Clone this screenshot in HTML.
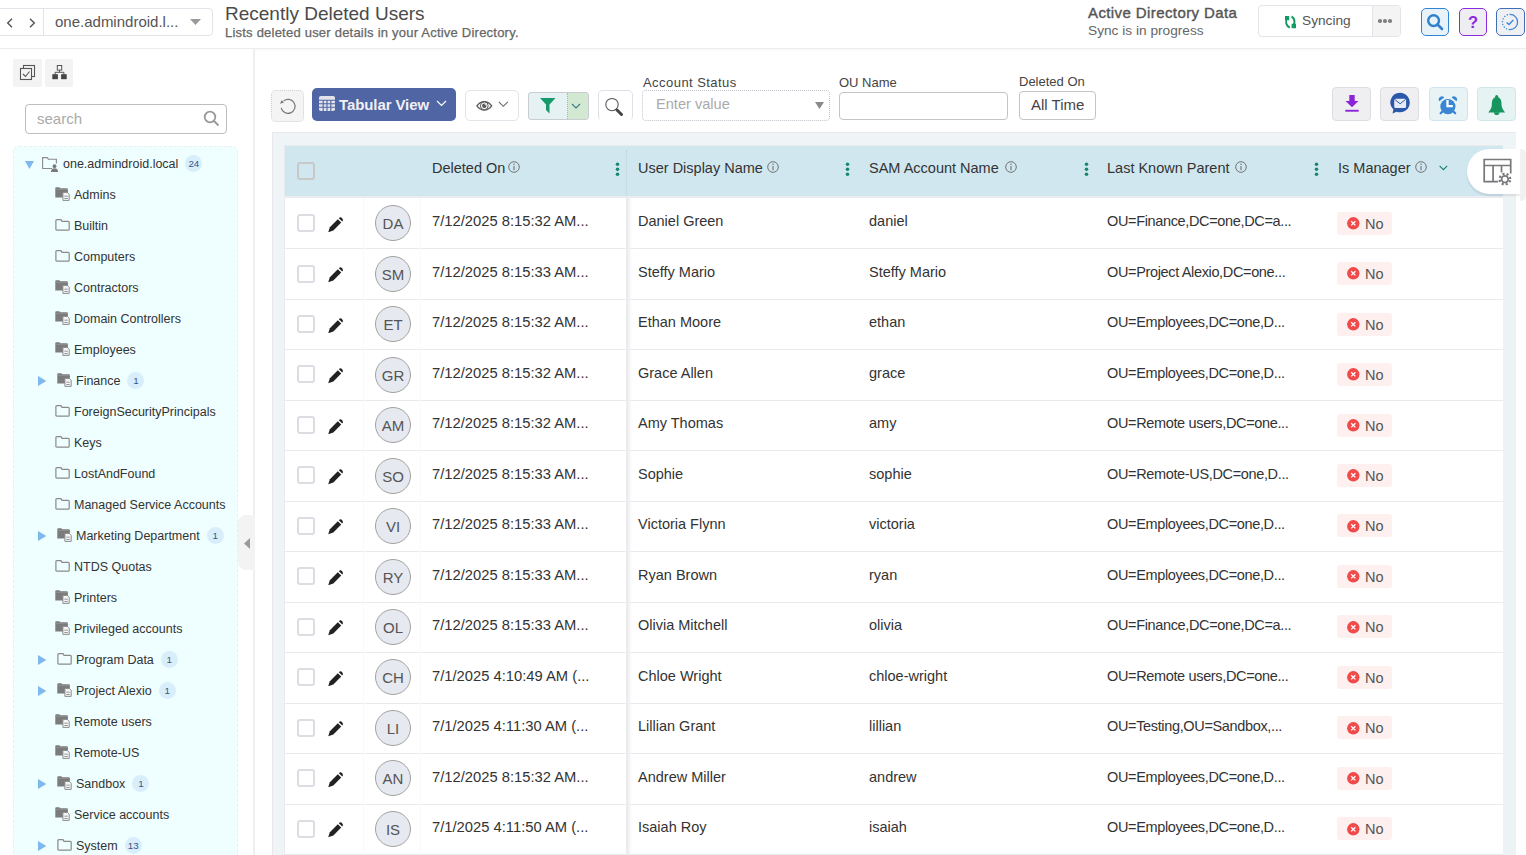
<!DOCTYPE html>
<html><head><meta charset="utf-8">
<style>
*{box-sizing:border-box;margin:0;padding:0}
html,body{width:1526px;height:855px;overflow:hidden;background:#fff;font-family:"Liberation Sans",sans-serif;color:#333}
.a{position:absolute}
#hdr{left:0;top:0;width:1526px;height:49px;background:#fff;border-bottom:1px solid #ececec;box-shadow:0 1px 2px rgba(0,0,0,0.04)}
#side{left:0;top:49px;width:255px;height:806px;background:#fff;border-right:2px solid #efefef}
#tree{left:13px;top:146px;width:225px;height:720px;background:#effefe;border-radius:6px;border:1px dashed #e6f1f1}
.ti{position:absolute;height:20px;font-size:12.5px;color:#333;white-space:nowrap;line-height:20px}
.badge{display:inline-block;background:#d8eefb;color:#3a5580;border-radius:9px;font-size:9.8px;line-height:17px;height:17px;min-width:17px;text-align:center;padding:0 2px;vertical-align:1px;margin-left:7px}
#panel{left:272px;top:132px;width:1244px;height:723px;background:#eff4f7;border-left:1px solid #e8e8ec;border-top:1px solid #eaeaee}
#thead{left:285px;top:146px;width:1218px;height:50px;background:#d0e7ef}
.th{position:absolute;top:146px;height:50px;line-height:44px;font-size:14.5px;color:#333;white-space:nowrap}
.row{position:absolute;left:285px;width:1218px;height:50.47px;background:#fff;border-bottom:1px solid #e9e9ee}
.cell{position:absolute;font-size:14.5px;color:#333;white-space:nowrap;line-height:20px}
.av{position:absolute;left:375px;width:36px;height:36px;border-radius:50%;background:#e6e9ef;border:1px solid #a2a2a2;font-size:15px;color:#555;text-align:center;line-height:35px}
.cb{position:absolute;left:297px;width:18px;height:18px;border:2px solid #dcdde2;border-radius:3px}
.no{position:absolute;left:1337px;width:55px;height:23px;background:#fff0f0;border-radius:3px;font-size:14.5px;color:#555;line-height:24px;padding-left:28px}

</style></head><body>
<div id="hdr" class="a"></div>
<div class="a" style="left:-6px;top:8px;width:219px;height:28px;border:1px solid #e3e4ea;border-radius:4px;background:#fff"></div>
<div class="a" style="left:43px;top:9px;width:1px;height:26px;background:#e3e4ea"></div>
<svg class="a" style="left:5px;top:16.5px" width="10" height="12" viewBox="0 0 10 12"><path d="M7 1.8 L2.7 6 L7 10.2" fill="none" stroke="#555" stroke-width="1.4"/></svg>
<svg class="a" style="left:26.5px;top:16.5px" width="10" height="12" viewBox="0 0 10 12"><path d="M3 1.8 L7.3 6 L3 10.2" fill="none" stroke="#555" stroke-width="1.4"/></svg>
<div class="a" style="left:55px;top:12px;font-size:15px;color:#555;line-height:20px">one.admindroid.l...</div>
<svg class="a" style="left:190px;top:19px" width="11" height="6" viewBox="0 0 11 6"><path d="M0 0 H11 L5.5 6Z" fill="#9a9a9a"/></svg>
<div class="a" style="left:225px;top:3px;font-size:19px;color:#4a4a4a;line-height:22px;white-space:nowrap">Recently Deleted Users</div>
<div class="a" style="left:225px;top:25px;font-size:13px;letter-spacing:0.22px;color:#666;-webkit-text-stroke:0.25px #666;line-height:15px;white-space:nowrap">Lists deleted user details in your Active Directory.</div>
<div class="a" style="left:1088px;top:4px;font-size:15px;letter-spacing:0.4px;color:#555;-webkit-text-stroke:0.4px #555;line-height:18px;white-space:nowrap">Active Directory Data</div>
<div class="a" style="left:1088px;top:22px;font-size:13.7px;color:#666;line-height:18px;white-space:nowrap">Sync is in progress</div>
<div class="a" style="left:1258px;top:5px;width:143px;height:32px;border:1px solid #e3e4ea;border-radius:4px;background:#fff;overflow:hidden"><div class="a" style="left:113px;top:0;width:30px;height:30px;background:#f4f4f5;border-left:1px solid #e3e4ea"></div></div>
<svg class="a" style="left:1283px;top:15px" width="14" height="14" viewBox="0 0 14 14"><path d="M4.2 3 A6.5 6.5 0 0 0 6.8 12.6" fill="none" stroke="#149a63" stroke-width="2"/><rect x="2" y="1" width="4.2" height="4.2" fill="#149a63"/><path d="M8.6 1.4 A6.5 6.5 0 0 1 10 11" fill="none" stroke="#149a63" stroke-width="2"/><rect x="8.6" y="8.8" width="4.4" height="4.4" fill="#149a63"/></svg>
<div class="a" style="left:1302px;top:12px;font-size:13.7px;color:#555;line-height:18px">Syncing</div>
<div class="a" style="left:1378.3px;top:19.3px;width:3.6px;height:3.6px;border-radius:50%;background:#808080"></div><div class="a" style="left:1383.2px;top:19.3px;width:3.6px;height:3.6px;border-radius:50%;background:#808080"></div><div class="a" style="left:1388.1px;top:19.3px;width:3.6px;height:3.6px;border-radius:50%;background:#808080"></div>
<div class="a" style="left:1421px;top:8px;width:28px;height:28px;border:1.5px solid #2f86d6;border-radius:5px;background:#e7f3f8"></div>
<svg class="a" style="left:1426px;top:13px" width="19" height="19" viewBox="0 0 19 19"><circle cx="7.6" cy="7.6" r="5.4" fill="none" stroke="#2f80cf" stroke-width="2.4"/><path d="M11.5 11.5 L16 16" stroke="#2f80cf" stroke-width="2.6" stroke-linecap="round"/></svg>
<div class="a" style="left:1459px;top:8px;width:28px;height:28px;border:1.5px solid #8a2be2;border-radius:5px;background:#eeeef2"></div>
<div class="a" style="left:1459px;top:10px;width:28px;text-align:center;font-size:16.5px;font-weight:bold;color:#8a2be2;line-height:22px;padding-top:1px">?</div>
<div class="a" style="left:1496px;top:8px;width:29px;height:28px;border:1.5px solid #3f6fb8;border-radius:5px;background:#eef0f4"></div>
<svg class="a" style="left:1501px;top:13px" width="19" height="19" viewBox="0 0 19 19"><path d="M9 1.4 A7.6 7.6 0 0 1 9 16.6" fill="none" stroke="#3f86d6" stroke-width="1.3"/><path d="M9 16.6 A7.6 7.6 0 0 1 9 1.4" fill="none" stroke="#3f86d6" stroke-width="1.3" stroke-dasharray="1.3 1.6"/><path d="M5.6 9.4 L8 11.6 L12.3 7" fill="none" stroke="#3f86d6" stroke-width="1.4"/></svg>
<div id="side" class="a"></div>
<div class="a" style="left:13px;top:59px;width:29px;height:28px;background:#f3f3f3;border-radius:2px"></div>
<div class="a" style="left:45px;top:59px;width:28px;height:28px;background:#f3f3f3;border-radius:2px"></div>
<svg class="a" style="left:19px;top:64px" width="17" height="17" viewBox="0 0 17 17"><rect x="4.5" y="1.5" width="11" height="11" fill="none" stroke="#555" stroke-width="1.1"/><rect x="1.5" y="4.5" width="11" height="11" fill="#f3f3f3" stroke="#555" stroke-width="1.1"/><path d="M4 10 L6.5 12.5 L10.5 7.5" fill="none" stroke="#555" stroke-width="1.1"/></svg>
<svg class="a" style="left:51px;top:65px" width="16" height="15" viewBox="0 0 16 15"><rect x="6.3" y="0.5" width="4.4" height="4.6" fill="none" stroke="#555" stroke-width="1"/><path d="M8.5 5.1 V7.3 M4.1 7.3 H12.9 M4.1 7.3 V9.5 M12.9 7.3 V9.5" stroke="#555" fill="none" stroke-width="1"/><rect x="1.3" y="9.2" width="5.6" height="5" fill="#444"/><rect x="10.1" y="9.2" width="5.6" height="5" fill="#444"/></svg>
<div class="a" style="left:25px;top:104px;width:202px;height:30px;border:1px solid #bdbdbd;border-radius:4px;background:#fff"></div>
<div class="a" style="left:37px;top:110px;font-size:15px;color:#aaa;line-height:18px">search</div>
<svg class="a" style="left:203px;top:110px" width="17" height="17" viewBox="0 0 17 17"><circle cx="7" cy="7" r="5.3" fill="none" stroke="#9a9a9a" stroke-width="1.8"/><path d="M11 11 L15.5 15.5" stroke="#9a9a9a" stroke-width="2"/></svg>
<div id="tree" class="a"></div>
<div class="a" style="left:238px;top:515px;width:17px;height:55px;background:#f3f3f3;border-radius:8px 0 0 8px"></div>
<svg class="a" style="left:244px;top:538px" width="6" height="11" viewBox="0 0 6 11"><path d="M6 0 V11 L0 5.5Z" fill="#9a9a9a"/></svg>
<svg class="a" style="left:25px;top:160.8px" width="9" height="8" viewBox="0 0 9 8"><path d="M0 0 H9 L4.5 8Z" fill="#7db9ee"/></svg>
<svg class="a" style="left:42px;top:157px" width="17" height="15" viewBox="0 0 17 15"><path d="M10 11.5 H0.6 V0.6 H5.2 L6.4 2.2 H14.4 V6.5" fill="none" stroke="#8a8a8a" stroke-width="1.1"/><circle cx="12.5" cy="9.2" r="1.9" fill="#7a7a7a"/><path d="M9 15 Q9 11.3 12.5 11.3 Q16 11.3 16 15Z" fill="#7a7a7a"/></svg>
<div class="ti" style="left:63px;top:154.3px">one.admindroid.local<span class="badge">24</span></div>
<svg class="a" style="left:55px;top:187px" width="16" height="15" viewBox="0 0 16 15"><path d="M0.3 1.2 Q0.3 0.3 1.2 0.3 H4.3 L5.3 1.3 H11.8 Q12.9 1.3 12.9 2.4 V10.4 H0.3Z" fill="#7b7b7b"/><path d="M0.7 2.3 H12.6" stroke="#a0a0a0" stroke-width="0.6"/><path d="M7.9 5.4 H12.3 L14.2 7.3 V13.4 H7.9Z" fill="#f4f6f8" stroke="#8c8c8c" stroke-width="1"/><path d="M9.3 9.2 H12.8 M9.3 11.5 H12.8" stroke="#8c8c8c" stroke-width="0.9"/></svg>
<div class="ti" style="left:74px;top:185.3px">Admins</div>
<svg class="a" style="left:55px;top:219px" width="16" height="13" viewBox="0 0 16 13"><path d="M0.9 1.6 Q0.9 0.6 1.9 0.6 H6 L7 2.3 H13.2 Q14.2 2.3 14.2 3.3 V10.2 Q14.2 11.2 13.2 11.2 H1.9 Q0.9 11.2 0.9 10.2Z" fill="none" stroke="#8a8a8a" stroke-width="1.2"/></svg>
<div class="ti" style="left:74px;top:216.3px">Builtin</div>
<svg class="a" style="left:55px;top:250px" width="16" height="13" viewBox="0 0 16 13"><path d="M0.9 1.6 Q0.9 0.6 1.9 0.6 H6 L7 2.3 H13.2 Q14.2 2.3 14.2 3.3 V10.2 Q14.2 11.2 13.2 11.2 H1.9 Q0.9 11.2 0.9 10.2Z" fill="none" stroke="#8a8a8a" stroke-width="1.2"/></svg>
<div class="ti" style="left:74px;top:247.3px">Computers</div>
<svg class="a" style="left:55px;top:280px" width="16" height="15" viewBox="0 0 16 15"><path d="M0.3 1.2 Q0.3 0.3 1.2 0.3 H4.3 L5.3 1.3 H11.8 Q12.9 1.3 12.9 2.4 V10.4 H0.3Z" fill="#7b7b7b"/><path d="M0.7 2.3 H12.6" stroke="#a0a0a0" stroke-width="0.6"/><path d="M7.9 5.4 H12.3 L14.2 7.3 V13.4 H7.9Z" fill="#f4f6f8" stroke="#8c8c8c" stroke-width="1"/><path d="M9.3 9.2 H12.8 M9.3 11.5 H12.8" stroke="#8c8c8c" stroke-width="0.9"/></svg>
<div class="ti" style="left:74px;top:278.3px">Contractors</div>
<svg class="a" style="left:55px;top:311px" width="16" height="15" viewBox="0 0 16 15"><path d="M0.3 1.2 Q0.3 0.3 1.2 0.3 H4.3 L5.3 1.3 H11.8 Q12.9 1.3 12.9 2.4 V10.4 H0.3Z" fill="#7b7b7b"/><path d="M0.7 2.3 H12.6" stroke="#a0a0a0" stroke-width="0.6"/><path d="M7.9 5.4 H12.3 L14.2 7.3 V13.4 H7.9Z" fill="#f4f6f8" stroke="#8c8c8c" stroke-width="1"/><path d="M9.3 9.2 H12.8 M9.3 11.5 H12.8" stroke="#8c8c8c" stroke-width="0.9"/></svg>
<div class="ti" style="left:74px;top:309.3px">Domain Controllers</div>
<svg class="a" style="left:55px;top:342px" width="16" height="15" viewBox="0 0 16 15"><path d="M0.3 1.2 Q0.3 0.3 1.2 0.3 H4.3 L5.3 1.3 H11.8 Q12.9 1.3 12.9 2.4 V10.4 H0.3Z" fill="#7b7b7b"/><path d="M0.7 2.3 H12.6" stroke="#a0a0a0" stroke-width="0.6"/><path d="M7.9 5.4 H12.3 L14.2 7.3 V13.4 H7.9Z" fill="#f4f6f8" stroke="#8c8c8c" stroke-width="1"/><path d="M9.3 9.2 H12.8 M9.3 11.5 H12.8" stroke="#8c8c8c" stroke-width="0.9"/></svg>
<div class="ti" style="left:74px;top:340.3px">Employees</div>
<svg class="a" style="left:38px;top:376.3px" width="9" height="10" viewBox="0 0 9 10"><path d="M0 0 V10 L8.3 5Z" fill="#7db9ee"/></svg>
<svg class="a" style="left:57px;top:373px" width="16" height="15" viewBox="0 0 16 15"><path d="M0.3 1.2 Q0.3 0.3 1.2 0.3 H4.3 L5.3 1.3 H11.8 Q12.9 1.3 12.9 2.4 V10.4 H0.3Z" fill="#7b7b7b"/><path d="M0.7 2.3 H12.6" stroke="#a0a0a0" stroke-width="0.6"/><path d="M7.9 5.4 H12.3 L14.2 7.3 V13.4 H7.9Z" fill="#f4f6f8" stroke="#8c8c8c" stroke-width="1"/><path d="M9.3 9.2 H12.8 M9.3 11.5 H12.8" stroke="#8c8c8c" stroke-width="0.9"/></svg>
<div class="ti" style="left:76px;top:371.3px">Finance<span class="badge">1</span></div>
<svg class="a" style="left:55px;top:405px" width="16" height="13" viewBox="0 0 16 13"><path d="M0.9 1.6 Q0.9 0.6 1.9 0.6 H6 L7 2.3 H13.2 Q14.2 2.3 14.2 3.3 V10.2 Q14.2 11.2 13.2 11.2 H1.9 Q0.9 11.2 0.9 10.2Z" fill="none" stroke="#8a8a8a" stroke-width="1.2"/></svg>
<div class="ti" style="left:74px;top:402.3px">ForeignSecurityPrincipals</div>
<svg class="a" style="left:55px;top:436px" width="16" height="13" viewBox="0 0 16 13"><path d="M0.9 1.6 Q0.9 0.6 1.9 0.6 H6 L7 2.3 H13.2 Q14.2 2.3 14.2 3.3 V10.2 Q14.2 11.2 13.2 11.2 H1.9 Q0.9 11.2 0.9 10.2Z" fill="none" stroke="#8a8a8a" stroke-width="1.2"/></svg>
<div class="ti" style="left:74px;top:433.3px">Keys</div>
<svg class="a" style="left:55px;top:467px" width="16" height="13" viewBox="0 0 16 13"><path d="M0.9 1.6 Q0.9 0.6 1.9 0.6 H6 L7 2.3 H13.2 Q14.2 2.3 14.2 3.3 V10.2 Q14.2 11.2 13.2 11.2 H1.9 Q0.9 11.2 0.9 10.2Z" fill="none" stroke="#8a8a8a" stroke-width="1.2"/></svg>
<div class="ti" style="left:74px;top:464.3px">LostAndFound</div>
<svg class="a" style="left:55px;top:498px" width="16" height="13" viewBox="0 0 16 13"><path d="M0.9 1.6 Q0.9 0.6 1.9 0.6 H6 L7 2.3 H13.2 Q14.2 2.3 14.2 3.3 V10.2 Q14.2 11.2 13.2 11.2 H1.9 Q0.9 11.2 0.9 10.2Z" fill="none" stroke="#8a8a8a" stroke-width="1.2"/></svg>
<div class="ti" style="left:74px;top:495.3px">Managed Service Accounts</div>
<svg class="a" style="left:38px;top:531.3px" width="9" height="10" viewBox="0 0 9 10"><path d="M0 0 V10 L8.3 5Z" fill="#7db9ee"/></svg>
<svg class="a" style="left:57px;top:528px" width="16" height="15" viewBox="0 0 16 15"><path d="M0.3 1.2 Q0.3 0.3 1.2 0.3 H4.3 L5.3 1.3 H11.8 Q12.9 1.3 12.9 2.4 V10.4 H0.3Z" fill="#7b7b7b"/><path d="M0.7 2.3 H12.6" stroke="#a0a0a0" stroke-width="0.6"/><path d="M7.9 5.4 H12.3 L14.2 7.3 V13.4 H7.9Z" fill="#f4f6f8" stroke="#8c8c8c" stroke-width="1"/><path d="M9.3 9.2 H12.8 M9.3 11.5 H12.8" stroke="#8c8c8c" stroke-width="0.9"/></svg>
<div class="ti" style="left:76px;top:526.3px">Marketing Department<span class="badge">1</span></div>
<svg class="a" style="left:55px;top:560px" width="16" height="13" viewBox="0 0 16 13"><path d="M0.9 1.6 Q0.9 0.6 1.9 0.6 H6 L7 2.3 H13.2 Q14.2 2.3 14.2 3.3 V10.2 Q14.2 11.2 13.2 11.2 H1.9 Q0.9 11.2 0.9 10.2Z" fill="none" stroke="#8a8a8a" stroke-width="1.2"/></svg>
<div class="ti" style="left:74px;top:557.3px">NTDS Quotas</div>
<svg class="a" style="left:55px;top:590px" width="16" height="15" viewBox="0 0 16 15"><path d="M0.3 1.2 Q0.3 0.3 1.2 0.3 H4.3 L5.3 1.3 H11.8 Q12.9 1.3 12.9 2.4 V10.4 H0.3Z" fill="#7b7b7b"/><path d="M0.7 2.3 H12.6" stroke="#a0a0a0" stroke-width="0.6"/><path d="M7.9 5.4 H12.3 L14.2 7.3 V13.4 H7.9Z" fill="#f4f6f8" stroke="#8c8c8c" stroke-width="1"/><path d="M9.3 9.2 H12.8 M9.3 11.5 H12.8" stroke="#8c8c8c" stroke-width="0.9"/></svg>
<div class="ti" style="left:74px;top:588.3px">Printers</div>
<svg class="a" style="left:55px;top:621px" width="16" height="15" viewBox="0 0 16 15"><path d="M0.3 1.2 Q0.3 0.3 1.2 0.3 H4.3 L5.3 1.3 H11.8 Q12.9 1.3 12.9 2.4 V10.4 H0.3Z" fill="#7b7b7b"/><path d="M0.7 2.3 H12.6" stroke="#a0a0a0" stroke-width="0.6"/><path d="M7.9 5.4 H12.3 L14.2 7.3 V13.4 H7.9Z" fill="#f4f6f8" stroke="#8c8c8c" stroke-width="1"/><path d="M9.3 9.2 H12.8 M9.3 11.5 H12.8" stroke="#8c8c8c" stroke-width="0.9"/></svg>
<div class="ti" style="left:74px;top:619.3px">Privileged accounts</div>
<svg class="a" style="left:38px;top:655.3px" width="9" height="10" viewBox="0 0 9 10"><path d="M0 0 V10 L8.3 5Z" fill="#7db9ee"/></svg>
<svg class="a" style="left:57px;top:653px" width="16" height="13" viewBox="0 0 16 13"><path d="M0.9 1.6 Q0.9 0.6 1.9 0.6 H6 L7 2.3 H13.2 Q14.2 2.3 14.2 3.3 V10.2 Q14.2 11.2 13.2 11.2 H1.9 Q0.9 11.2 0.9 10.2Z" fill="none" stroke="#8a8a8a" stroke-width="1.2"/></svg>
<div class="ti" style="left:76px;top:650.3px">Program Data<span class="badge">1</span></div>
<svg class="a" style="left:38px;top:686.3px" width="9" height="10" viewBox="0 0 9 10"><path d="M0 0 V10 L8.3 5Z" fill="#7db9ee"/></svg>
<svg class="a" style="left:57px;top:683px" width="16" height="15" viewBox="0 0 16 15"><path d="M0.3 1.2 Q0.3 0.3 1.2 0.3 H4.3 L5.3 1.3 H11.8 Q12.9 1.3 12.9 2.4 V10.4 H0.3Z" fill="#7b7b7b"/><path d="M0.7 2.3 H12.6" stroke="#a0a0a0" stroke-width="0.6"/><path d="M7.9 5.4 H12.3 L14.2 7.3 V13.4 H7.9Z" fill="#f4f6f8" stroke="#8c8c8c" stroke-width="1"/><path d="M9.3 9.2 H12.8 M9.3 11.5 H12.8" stroke="#8c8c8c" stroke-width="0.9"/></svg>
<div class="ti" style="left:76px;top:681.3px">Project Alexio<span class="badge">1</span></div>
<svg class="a" style="left:55px;top:714px" width="16" height="15" viewBox="0 0 16 15"><path d="M0.3 1.2 Q0.3 0.3 1.2 0.3 H4.3 L5.3 1.3 H11.8 Q12.9 1.3 12.9 2.4 V10.4 H0.3Z" fill="#7b7b7b"/><path d="M0.7 2.3 H12.6" stroke="#a0a0a0" stroke-width="0.6"/><path d="M7.9 5.4 H12.3 L14.2 7.3 V13.4 H7.9Z" fill="#f4f6f8" stroke="#8c8c8c" stroke-width="1"/><path d="M9.3 9.2 H12.8 M9.3 11.5 H12.8" stroke="#8c8c8c" stroke-width="0.9"/></svg>
<div class="ti" style="left:74px;top:712.3px">Remote users</div>
<svg class="a" style="left:55px;top:745px" width="16" height="15" viewBox="0 0 16 15"><path d="M0.3 1.2 Q0.3 0.3 1.2 0.3 H4.3 L5.3 1.3 H11.8 Q12.9 1.3 12.9 2.4 V10.4 H0.3Z" fill="#7b7b7b"/><path d="M0.7 2.3 H12.6" stroke="#a0a0a0" stroke-width="0.6"/><path d="M7.9 5.4 H12.3 L14.2 7.3 V13.4 H7.9Z" fill="#f4f6f8" stroke="#8c8c8c" stroke-width="1"/><path d="M9.3 9.2 H12.8 M9.3 11.5 H12.8" stroke="#8c8c8c" stroke-width="0.9"/></svg>
<div class="ti" style="left:74px;top:743.3px">Remote-US</div>
<svg class="a" style="left:38px;top:779.3px" width="9" height="10" viewBox="0 0 9 10"><path d="M0 0 V10 L8.3 5Z" fill="#7db9ee"/></svg>
<svg class="a" style="left:57px;top:776px" width="16" height="15" viewBox="0 0 16 15"><path d="M0.3 1.2 Q0.3 0.3 1.2 0.3 H4.3 L5.3 1.3 H11.8 Q12.9 1.3 12.9 2.4 V10.4 H0.3Z" fill="#7b7b7b"/><path d="M0.7 2.3 H12.6" stroke="#a0a0a0" stroke-width="0.6"/><path d="M7.9 5.4 H12.3 L14.2 7.3 V13.4 H7.9Z" fill="#f4f6f8" stroke="#8c8c8c" stroke-width="1"/><path d="M9.3 9.2 H12.8 M9.3 11.5 H12.8" stroke="#8c8c8c" stroke-width="0.9"/></svg>
<div class="ti" style="left:76px;top:774.3px">Sandbox<span class="badge">1</span></div>
<svg class="a" style="left:55px;top:807px" width="16" height="15" viewBox="0 0 16 15"><path d="M0.3 1.2 Q0.3 0.3 1.2 0.3 H4.3 L5.3 1.3 H11.8 Q12.9 1.3 12.9 2.4 V10.4 H0.3Z" fill="#7b7b7b"/><path d="M0.7 2.3 H12.6" stroke="#a0a0a0" stroke-width="0.6"/><path d="M7.9 5.4 H12.3 L14.2 7.3 V13.4 H7.9Z" fill="#f4f6f8" stroke="#8c8c8c" stroke-width="1"/><path d="M9.3 9.2 H12.8 M9.3 11.5 H12.8" stroke="#8c8c8c" stroke-width="0.9"/></svg>
<div class="ti" style="left:74px;top:805.3px">Service accounts</div>
<svg class="a" style="left:38px;top:841.3px" width="9" height="10" viewBox="0 0 9 10"><path d="M0 0 V10 L8.3 5Z" fill="#7db9ee"/></svg>
<svg class="a" style="left:57px;top:839px" width="16" height="13" viewBox="0 0 16 13"><path d="M0.9 1.6 Q0.9 0.6 1.9 0.6 H6 L7 2.3 H13.2 Q14.2 2.3 14.2 3.3 V10.2 Q14.2 11.2 13.2 11.2 H1.9 Q0.9 11.2 0.9 10.2Z" fill="none" stroke="#8a8a8a" stroke-width="1.2"/></svg>
<div class="ti" style="left:76px;top:836.3px">System<span class="badge">13</span></div>
<div class="a" style="left:271px;top:90px;width:33px;height:32px;border:1px dotted #d0d0d0;border-radius:5px;background:#f4f4f4"></div>
<svg class="a" style="left:279px;top:97px" width="18" height="18" viewBox="0 0 18 18"><path d="M2.2 10.8 A7 7 0 1 0 4.6 3.9" fill="none" stroke="#777" stroke-width="1.2"/><path d="M1 6.8 L2.6 3.3 L5.1 5.4Z" fill="#777"/></svg>
<div class="a" style="left:312px;top:88px;width:144px;height:33px;background:#5065a3;border-radius:5px"></div>
<svg class="a" style="left:319px;top:96px" width="16" height="15" viewBox="0 0 16 15"><rect x="0" y="0" width="16" height="15" rx="1.8" fill="#e2e3ea"/><path d="M0 4.2 H16 M0 7.8 H16 M0 11.3 H16 M4.2 4.2 V15 M8 4.2 V15 M11.8 4.2 V15" stroke="#5065a3" stroke-width="1.1"/></svg>
<div class="a" style="left:339px;top:95px;font-size:15px;font-weight:bold;color:#f0f0f4;line-height:18px;letter-spacing:-0.1px;padding-top:0.5px">Tabular View</div>
<svg class="a" style="left:436px;top:100px" width="11" height="7" viewBox="0 0 11 7"><path d="M1 1 L5.5 5.5 L10 1" fill="none" stroke="#fff" stroke-width="1.2"/></svg>
<div class="a" style="left:465px;top:90px;width:54px;height:31px;border:1px solid #e3e4ea;border-radius:5px;background:#fff"></div>
<svg class="a" style="left:475.5px;top:100.7px" width="17" height="10" viewBox="0 0 17 10"><path d="M0.9 4.8 C3.5 1.4 5.6 0.6 8.3 0.6 C11 0.6 13.1 1.4 15.7 4.8 C13.1 8.2 11 9 8.3 9 C5.6 9 3.5 8.2 0.9 4.8Z" fill="none" stroke="#555" stroke-width="1.3"/><circle cx="8.3" cy="4.8" r="3.9" fill="#fff" stroke="#555" stroke-width="1"/><circle cx="8.3" cy="4.8" r="2.2" fill="#555"/><circle cx="9.3" cy="3.8" r="0.7" fill="#ddd"/></svg>
<svg class="a" style="left:497.5px;top:101.3px" width="11" height="7" viewBox="0 0 11 7"><path d="M0.8 0.8 L5.3 5.3 L9.8 0.8" fill="none" stroke="#666" stroke-width="1.1"/></svg>
<div class="a" style="left:528px;top:92px;width:61px;height:28px;border:1px solid #c9cdd2;border-radius:3px;background:#e6f1f3;overflow:hidden"><div class="a" style="left:38px;top:0;width:23px;height:26px;background:#d3e8d0;border-left:1px dotted #b0b8b8"></div></div>
<svg class="a" style="left:540px;top:98px" width="16" height="16" viewBox="0 0 16 16"><path d="M0 0 H15.5 L9.5 6.5 V15.5 L6 12 V6.5Z" fill="#169a6a"/></svg>
<svg class="a" style="left:571px;top:103px" width="10" height="7" viewBox="0 0 10 7"><path d="M1 1 L5 5 L9 1" fill="none" stroke="#3a7a8a" stroke-width="1.1"/></svg>
<div class="a" style="left:598px;top:90px;width:35px;height:31px;border:1px solid #e0e1e8;border-bottom-color:transparent;border-radius:5px;background:#fff"></div>
<svg class="a" style="left:604px;top:97px" width="20" height="19" viewBox="0 0 20 19"><circle cx="8" cy="7.6" r="6.2" fill="none" stroke="#555" stroke-width="1.05"/><path d="M13 13 L17.5 17.5" stroke="#444" stroke-width="3" stroke-linecap="round"/></svg>
<div class="a" style="left:643px;top:74.5px;font-size:13px;letter-spacing:0.45px;color:#444;line-height:16px">Account Status</div>
<div class="a" style="left:642px;top:90px;width:188px;height:31px;border:1px dotted #c4c4cc;border-radius:4px;background:#fff"></div>
<div class="a" style="left:656px;top:95px;font-size:14.6px;color:#aaa;line-height:18px">Enter value</div>
<svg class="a" style="left:815px;top:102px" width="9" height="7" viewBox="0 0 9 7"><path d="M0 0 H9 L4.5 7Z" fill="#8a8a8a"/></svg>
<div class="a" style="left:839px;top:75px;font-size:13px;color:#444;line-height:16px">OU Name</div>
<div class="a" style="left:839px;top:92px;width:169px;height:28px;border:1px solid #c4c4c4;border-radius:4px;background:#fff"></div>
<div class="a" style="left:1019px;top:74px;font-size:13px;color:#444;line-height:16px">Deleted On</div>
<div class="a" style="left:1019px;top:91px;width:77px;height:29px;border:1px solid #c4c4c4;border-radius:4px;background:#fff"></div>
<div class="a" style="left:1031px;top:96px;font-size:15px;color:#444;line-height:18px">All Time</div>
<div class="a" style="left:1332px;top:87px;width:39px;height:34px;border:1px solid #dcdce2;border-radius:4px;background:#efeff2"></div>
<div class="a" style="left:1380px;top:87px;width:39px;height:34px;border:1px solid #dcdce2;border-radius:4px;background:#efeff2"></div>
<div class="a" style="left:1429px;top:87px;width:39px;height:34px;border:1px solid #cfe4ee;border-radius:4px;background:#e8f3f6"></div>
<div class="a" style="left:1477px;top:87px;width:39px;height:34px;border:1px solid #cfe6ea;border-radius:4px;background:#e6f3f3"></div>
<svg class="a" style="left:1342px;top:94px" width="20" height="20" viewBox="0 0 20 20"><path d="M7.3 1 H12.7 V7 H16.5 L10 13.2 L3.5 7 H7.3Z" fill="#8e24d8"/><rect x="3.3" y="15.8" width="13.4" height="1.9" fill="#8e24d8"/></svg>
<svg class="a" style="left:1389px;top:92px" width="22" height="23" viewBox="0 0 22 23"><path d="M11 0.7 A9.8 9.8 0 1 1 7.6 19.7 L3.5 21.5 L4.4 17.6 A9.8 9.8 0 0 1 11 0.7Z" fill="#2b58a8"/><rect x="5.2" y="6.8" width="11.9" height="9.2" rx="1.6" fill="#e8ecf6"/><path d="M5.9 7.6 L11.15 11.8 L16.4 7.6" fill="none" stroke="#2b58a8" stroke-width="1"/></svg>
<svg class="a" style="left:1437px;top:94.5px" width="22" height="20" viewBox="0 0 22 20"><circle cx="10.9" cy="11.6" r="7.6" fill="#3a86d2"/><path d="M2.4 6.2 A2.9 2.9 0 0 1 7.2 2.6Z M19.4 6.2 A2.9 2.9 0 0 0 14.6 2.6Z" fill="#3a86d2"/><path d="M5.3 16.6 L3.6 18.3 M16.5 16.6 L18.2 18.3" stroke="#3a86d2" stroke-width="2.2" stroke-linecap="round"/><path d="M10.5 5 V11.2 H15.8" fill="none" stroke="#fff" stroke-width="2.3"/></svg>
<svg class="a" style="left:1487px;top:94.6px" width="20" height="22" viewBox="0 0 20 22"><circle cx="9.7" cy="1.6" r="1.5" fill="#16965e"/><path d="M9.7 1.8 C14.5 2.6 14.5 7 14.6 10.5 C14.8 13.5 16.5 15.5 18.2 17.4 H1.2 C2.9 15.5 4.6 13.5 4.8 10.5 C4.9 7 4.9 2.6 9.7 1.8Z" fill="#16965e"/><path d="M6.9 17.2 A2.8 2.8 0 0 0 12.5 17.2Z" fill="#16965e"/></svg>
<div id="panel" class="a"></div>
<div class="a" style="left:1503px;top:196px;width:13px;height:659px;background:#edf2f5"></div>
<div id="thead" class="a"></div>
<div class="a" style="left:285px;top:196px;width:1218px;height:2px;background:#ececf0"></div><div class="a" style="left:285px;top:198px;width:1218px;height:1px;background:#fff"></div><div class="a" style="left:284px;top:145px;width:1px;height:710px;background:#e9e9ee"></div><div class="a" style="left:284px;top:145px;width:1219px;height:1px;background:#e9e9ee"></div>
<div class="cb" style="top:162px;border:2px solid #c8c8c8"></div>
<div class="th" style="left:432px">Deleted On</div>
<svg class="a" style="left:508px;top:161px" width="12" height="12" viewBox="0 0 12 12"><circle cx="6" cy="6" r="5.3" fill="none" stroke="#666" stroke-width="0.9"/><path d="M6 5 V9.2" stroke="#666" stroke-width="1"/><circle cx="6" cy="3.3" r="0.7" fill="#666"/></svg>
<svg class="a" style="left:614.5px;top:162px" width="5" height="15" viewBox="0 0 5 15"><circle cx="2.5" cy="2.2" r="1.75" fill="#17876a"/><circle cx="2.5" cy="7.2" r="1.75" fill="#17876a"/><circle cx="2.5" cy="12.2" r="1.75" fill="#17876a"/></svg>
<div class="th" style="left:638px">User Display Name</div>
<svg class="a" style="left:767px;top:161px" width="12" height="12" viewBox="0 0 12 12"><circle cx="6" cy="6" r="5.3" fill="none" stroke="#666" stroke-width="0.9"/><path d="M6 5 V9.2" stroke="#666" stroke-width="1"/><circle cx="6" cy="3.3" r="0.7" fill="#666"/></svg>
<svg class="a" style="left:844.5px;top:162px" width="5" height="15" viewBox="0 0 5 15"><circle cx="2.5" cy="2.2" r="1.75" fill="#17876a"/><circle cx="2.5" cy="7.2" r="1.75" fill="#17876a"/><circle cx="2.5" cy="12.2" r="1.75" fill="#17876a"/></svg>
<div class="th" style="left:869px">SAM Account Name</div>
<svg class="a" style="left:1005px;top:161px" width="12" height="12" viewBox="0 0 12 12"><circle cx="6" cy="6" r="5.3" fill="none" stroke="#666" stroke-width="0.9"/><path d="M6 5 V9.2" stroke="#666" stroke-width="1"/><circle cx="6" cy="3.3" r="0.7" fill="#666"/></svg>
<svg class="a" style="left:1083.5px;top:162px" width="5" height="15" viewBox="0 0 5 15"><circle cx="2.5" cy="2.2" r="1.75" fill="#17876a"/><circle cx="2.5" cy="7.2" r="1.75" fill="#17876a"/><circle cx="2.5" cy="12.2" r="1.75" fill="#17876a"/></svg>
<div class="th" style="left:1107px">Last Known Parent</div>
<svg class="a" style="left:1235px;top:161px" width="12" height="12" viewBox="0 0 12 12"><circle cx="6" cy="6" r="5.3" fill="none" stroke="#666" stroke-width="0.9"/><path d="M6 5 V9.2" stroke="#666" stroke-width="1"/><circle cx="6" cy="3.3" r="0.7" fill="#666"/></svg>
<svg class="a" style="left:1313.5px;top:162px" width="5" height="15" viewBox="0 0 5 15"><circle cx="2.5" cy="2.2" r="1.75" fill="#17876a"/><circle cx="2.5" cy="7.2" r="1.75" fill="#17876a"/><circle cx="2.5" cy="12.2" r="1.75" fill="#17876a"/></svg>
<div class="th" style="left:1338px">Is Manager</div>
<svg class="a" style="left:1415px;top:161px" width="12" height="12" viewBox="0 0 12 12"><circle cx="6" cy="6" r="5.3" fill="none" stroke="#666" stroke-width="0.9"/><path d="M6 5 V9.2" stroke="#666" stroke-width="1"/><circle cx="6" cy="3.3" r="0.7" fill="#666"/></svg>
<svg class="a" style="left:1439px;top:164.5px" width="9" height="6" viewBox="0 0 9 6"><path d="M0.6 0.8 L4.4 4.6 L8.2 0.8" fill="none" stroke="#17876a" stroke-width="1.2"/></svg>
<div class="a" style="left:626px;top:150px;width:1px;height:46px;border-left:1px dotted #c0d2da"></div>
<div class="row" style="top:199.00px"></div>
<div class="cb" style="top:214.0px"></div>
<svg class="a" style="left:326.9px;top:214.6px" width="17.6" height="17.6" viewBox="0 0 16 16"><path d="M1.1 15.7 L2.6 11.05 L9.83 3.77 L12.95 6.87 L5.75 14.15Z" fill="#222"/><path d="M10.75 2.85 L13.87 5.95 A2.2 2.2 0 0 0 10.75 2.85Z" fill="#222"/></svg>
<div class="av" style="top:205.2px">DA</div>
<div class="cell" style="left:432px;top:211.3px;font-size:14.75px">7/12/2025 8:15:32 AM...</div>
<div class="cell" style="left:638px;top:211.3px">Daniel Green</div>
<div class="cell" style="left:869px;top:211.3px">daniel</div>
<div class="cell" style="left:1107px;top:211.3px;letter-spacing:-0.35px">OU=Finance,DC=one,DC=a...</div>
<div class="no" style="top:211.6px">No</div>
<svg class="a" style="left:1346.8px;top:216.9px" width="13" height="13" viewBox="0 0 13 13"><circle cx="6.3" cy="6.3" r="6.2" fill="#f04a4a"/><path d="M4.2 4.2 L8.4 8.4 M8.4 4.2 L4.2 8.4" stroke="#fff" stroke-width="1.3"/></svg>
<div class="row" style="top:249.47px"></div>
<div class="cb" style="top:264.5px"></div>
<svg class="a" style="left:326.9px;top:265.1px" width="17.6" height="17.6" viewBox="0 0 16 16"><path d="M1.1 15.7 L2.6 11.05 L9.83 3.77 L12.95 6.87 L5.75 14.15Z" fill="#222"/><path d="M10.75 2.85 L13.87 5.95 A2.2 2.2 0 0 0 10.75 2.85Z" fill="#222"/></svg>
<div class="av" style="top:255.7px">SM</div>
<div class="cell" style="left:432px;top:261.8px;font-size:14.75px">7/12/2025 8:15:33 AM...</div>
<div class="cell" style="left:638px;top:261.8px">Steffy Mario</div>
<div class="cell" style="left:869px;top:261.8px">Steffy Mario</div>
<div class="cell" style="left:1107px;top:261.8px;letter-spacing:-0.35px">OU=Project Alexio,DC=one...</div>
<div class="no" style="top:262.1px">No</div>
<svg class="a" style="left:1346.8px;top:267.4px" width="13" height="13" viewBox="0 0 13 13"><circle cx="6.3" cy="6.3" r="6.2" fill="#f04a4a"/><path d="M4.2 4.2 L8.4 8.4 M8.4 4.2 L4.2 8.4" stroke="#fff" stroke-width="1.3"/></svg>
<div class="row" style="top:299.94px"></div>
<div class="cb" style="top:314.9px"></div>
<svg class="a" style="left:326.9px;top:315.5px" width="17.6" height="17.6" viewBox="0 0 16 16"><path d="M1.1 15.7 L2.6 11.05 L9.83 3.77 L12.95 6.87 L5.75 14.15Z" fill="#222"/><path d="M10.75 2.85 L13.87 5.95 A2.2 2.2 0 0 0 10.75 2.85Z" fill="#222"/></svg>
<div class="av" style="top:306.1px">ET</div>
<div class="cell" style="left:432px;top:312.2px;font-size:14.75px">7/12/2025 8:15:32 AM...</div>
<div class="cell" style="left:638px;top:312.2px">Ethan Moore</div>
<div class="cell" style="left:869px;top:312.2px">ethan</div>
<div class="cell" style="left:1107px;top:312.2px;letter-spacing:-0.35px">OU=Employees,DC=one,D...</div>
<div class="no" style="top:312.5px">No</div>
<svg class="a" style="left:1346.8px;top:317.8px" width="13" height="13" viewBox="0 0 13 13"><circle cx="6.3" cy="6.3" r="6.2" fill="#f04a4a"/><path d="M4.2 4.2 L8.4 8.4 M8.4 4.2 L4.2 8.4" stroke="#fff" stroke-width="1.3"/></svg>
<div class="row" style="top:350.41px"></div>
<div class="cb" style="top:365.4px"></div>
<svg class="a" style="left:326.9px;top:366.0px" width="17.6" height="17.6" viewBox="0 0 16 16"><path d="M1.1 15.7 L2.6 11.05 L9.83 3.77 L12.95 6.87 L5.75 14.15Z" fill="#222"/><path d="M10.75 2.85 L13.87 5.95 A2.2 2.2 0 0 0 10.75 2.85Z" fill="#222"/></svg>
<div class="av" style="top:356.6px">GR</div>
<div class="cell" style="left:432px;top:362.7px;font-size:14.75px">7/12/2025 8:15:32 AM...</div>
<div class="cell" style="left:638px;top:362.7px">Grace Allen</div>
<div class="cell" style="left:869px;top:362.7px">grace</div>
<div class="cell" style="left:1107px;top:362.7px;letter-spacing:-0.35px">OU=Employees,DC=one,D...</div>
<div class="no" style="top:363.0px">No</div>
<svg class="a" style="left:1346.8px;top:368.3px" width="13" height="13" viewBox="0 0 13 13"><circle cx="6.3" cy="6.3" r="6.2" fill="#f04a4a"/><path d="M4.2 4.2 L8.4 8.4 M8.4 4.2 L4.2 8.4" stroke="#fff" stroke-width="1.3"/></svg>
<div class="row" style="top:400.88px"></div>
<div class="cb" style="top:415.9px"></div>
<svg class="a" style="left:326.9px;top:416.5px" width="17.6" height="17.6" viewBox="0 0 16 16"><path d="M1.1 15.7 L2.6 11.05 L9.83 3.77 L12.95 6.87 L5.75 14.15Z" fill="#222"/><path d="M10.75 2.85 L13.87 5.95 A2.2 2.2 0 0 0 10.75 2.85Z" fill="#222"/></svg>
<div class="av" style="top:407.1px">AM</div>
<div class="cell" style="left:432px;top:413.2px;font-size:14.75px">7/12/2025 8:15:32 AM...</div>
<div class="cell" style="left:638px;top:413.2px">Amy Thomas</div>
<div class="cell" style="left:869px;top:413.2px">amy</div>
<div class="cell" style="left:1107px;top:413.2px;letter-spacing:-0.35px">OU=Remote users,DC=one...</div>
<div class="no" style="top:413.5px">No</div>
<svg class="a" style="left:1346.8px;top:418.8px" width="13" height="13" viewBox="0 0 13 13"><circle cx="6.3" cy="6.3" r="6.2" fill="#f04a4a"/><path d="M4.2 4.2 L8.4 8.4 M8.4 4.2 L4.2 8.4" stroke="#fff" stroke-width="1.3"/></svg>
<div class="row" style="top:451.35px"></div>
<div class="cb" style="top:466.4px"></div>
<svg class="a" style="left:326.9px;top:467.0px" width="17.6" height="17.6" viewBox="0 0 16 16"><path d="M1.1 15.7 L2.6 11.05 L9.83 3.77 L12.95 6.87 L5.75 14.15Z" fill="#222"/><path d="M10.75 2.85 L13.87 5.95 A2.2 2.2 0 0 0 10.75 2.85Z" fill="#222"/></svg>
<div class="av" style="top:457.6px">SO</div>
<div class="cell" style="left:432px;top:463.7px;font-size:14.75px">7/12/2025 8:15:33 AM...</div>
<div class="cell" style="left:638px;top:463.7px">Sophie</div>
<div class="cell" style="left:869px;top:463.7px">sophie</div>
<div class="cell" style="left:1107px;top:463.7px;letter-spacing:-0.35px">OU=Remote-US,DC=one,D...</div>
<div class="no" style="top:464.0px">No</div>
<svg class="a" style="left:1346.8px;top:469.2px" width="13" height="13" viewBox="0 0 13 13"><circle cx="6.3" cy="6.3" r="6.2" fill="#f04a4a"/><path d="M4.2 4.2 L8.4 8.4 M8.4 4.2 L4.2 8.4" stroke="#fff" stroke-width="1.3"/></svg>
<div class="row" style="top:501.82px"></div>
<div class="cb" style="top:516.8px"></div>
<svg class="a" style="left:326.9px;top:517.4px" width="17.6" height="17.6" viewBox="0 0 16 16"><path d="M1.1 15.7 L2.6 11.05 L9.83 3.77 L12.95 6.87 L5.75 14.15Z" fill="#222"/><path d="M10.75 2.85 L13.87 5.95 A2.2 2.2 0 0 0 10.75 2.85Z" fill="#222"/></svg>
<div class="av" style="top:508.0px">VI</div>
<div class="cell" style="left:432px;top:514.1px;font-size:14.75px">7/12/2025 8:15:33 AM...</div>
<div class="cell" style="left:638px;top:514.1px">Victoria Flynn</div>
<div class="cell" style="left:869px;top:514.1px">victoria</div>
<div class="cell" style="left:1107px;top:514.1px;letter-spacing:-0.35px">OU=Employees,DC=one,D...</div>
<div class="no" style="top:514.4px">No</div>
<svg class="a" style="left:1346.8px;top:519.7px" width="13" height="13" viewBox="0 0 13 13"><circle cx="6.3" cy="6.3" r="6.2" fill="#f04a4a"/><path d="M4.2 4.2 L8.4 8.4 M8.4 4.2 L4.2 8.4" stroke="#fff" stroke-width="1.3"/></svg>
<div class="row" style="top:552.29px"></div>
<div class="cb" style="top:567.3px"></div>
<svg class="a" style="left:326.9px;top:567.9px" width="17.6" height="17.6" viewBox="0 0 16 16"><path d="M1.1 15.7 L2.6 11.05 L9.83 3.77 L12.95 6.87 L5.75 14.15Z" fill="#222"/><path d="M10.75 2.85 L13.87 5.95 A2.2 2.2 0 0 0 10.75 2.85Z" fill="#222"/></svg>
<div class="av" style="top:558.5px">RY</div>
<div class="cell" style="left:432px;top:564.6px;font-size:14.75px">7/12/2025 8:15:33 AM...</div>
<div class="cell" style="left:638px;top:564.6px">Ryan Brown</div>
<div class="cell" style="left:869px;top:564.6px">ryan</div>
<div class="cell" style="left:1107px;top:564.6px;letter-spacing:-0.35px">OU=Employees,DC=one,D...</div>
<div class="no" style="top:564.9px">No</div>
<svg class="a" style="left:1346.8px;top:570.2px" width="13" height="13" viewBox="0 0 13 13"><circle cx="6.3" cy="6.3" r="6.2" fill="#f04a4a"/><path d="M4.2 4.2 L8.4 8.4 M8.4 4.2 L4.2 8.4" stroke="#fff" stroke-width="1.3"/></svg>
<div class="row" style="top:602.76px"></div>
<div class="cb" style="top:617.8px"></div>
<svg class="a" style="left:326.9px;top:618.4px" width="17.6" height="17.6" viewBox="0 0 16 16"><path d="M1.1 15.7 L2.6 11.05 L9.83 3.77 L12.95 6.87 L5.75 14.15Z" fill="#222"/><path d="M10.75 2.85 L13.87 5.95 A2.2 2.2 0 0 0 10.75 2.85Z" fill="#222"/></svg>
<div class="av" style="top:609.0px">OL</div>
<div class="cell" style="left:432px;top:615.1px;font-size:14.75px">7/12/2025 8:15:33 AM...</div>
<div class="cell" style="left:638px;top:615.1px">Olivia Mitchell</div>
<div class="cell" style="left:869px;top:615.1px">olivia</div>
<div class="cell" style="left:1107px;top:615.1px;letter-spacing:-0.35px">OU=Finance,DC=one,DC=a...</div>
<div class="no" style="top:615.4px">No</div>
<svg class="a" style="left:1346.8px;top:620.7px" width="13" height="13" viewBox="0 0 13 13"><circle cx="6.3" cy="6.3" r="6.2" fill="#f04a4a"/><path d="M4.2 4.2 L8.4 8.4 M8.4 4.2 L4.2 8.4" stroke="#fff" stroke-width="1.3"/></svg>
<div class="row" style="top:653.23px"></div>
<div class="cb" style="top:668.2px"></div>
<svg class="a" style="left:326.9px;top:668.8px" width="17.6" height="17.6" viewBox="0 0 16 16"><path d="M1.1 15.7 L2.6 11.05 L9.83 3.77 L12.95 6.87 L5.75 14.15Z" fill="#222"/><path d="M10.75 2.85 L13.87 5.95 A2.2 2.2 0 0 0 10.75 2.85Z" fill="#222"/></svg>
<div class="av" style="top:659.4px">CH</div>
<div class="cell" style="left:432px;top:665.5px;font-size:14.75px">7/1/2025 4:10:49 AM (...</div>
<div class="cell" style="left:638px;top:665.5px">Chloe Wright</div>
<div class="cell" style="left:869px;top:665.5px">chloe-wright</div>
<div class="cell" style="left:1107px;top:665.5px;letter-spacing:-0.35px">OU=Remote users,DC=one...</div>
<div class="no" style="top:665.8px">No</div>
<svg class="a" style="left:1346.8px;top:671.1px" width="13" height="13" viewBox="0 0 13 13"><circle cx="6.3" cy="6.3" r="6.2" fill="#f04a4a"/><path d="M4.2 4.2 L8.4 8.4 M8.4 4.2 L4.2 8.4" stroke="#fff" stroke-width="1.3"/></svg>
<div class="row" style="top:703.70px"></div>
<div class="cb" style="top:718.7px"></div>
<svg class="a" style="left:326.9px;top:719.3px" width="17.6" height="17.6" viewBox="0 0 16 16"><path d="M1.1 15.7 L2.6 11.05 L9.83 3.77 L12.95 6.87 L5.75 14.15Z" fill="#222"/><path d="M10.75 2.85 L13.87 5.95 A2.2 2.2 0 0 0 10.75 2.85Z" fill="#222"/></svg>
<div class="av" style="top:709.9px">LI</div>
<div class="cell" style="left:432px;top:716.0px;font-size:14.75px">7/1/2025 4:11:30 AM (...</div>
<div class="cell" style="left:638px;top:716.0px">Lillian Grant</div>
<div class="cell" style="left:869px;top:716.0px">lillian</div>
<div class="cell" style="left:1107px;top:716.0px;letter-spacing:-0.35px">OU=Testing,OU=Sandbox,...</div>
<div class="no" style="top:716.3px">No</div>
<svg class="a" style="left:1346.8px;top:721.6px" width="13" height="13" viewBox="0 0 13 13"><circle cx="6.3" cy="6.3" r="6.2" fill="#f04a4a"/><path d="M4.2 4.2 L8.4 8.4 M8.4 4.2 L4.2 8.4" stroke="#fff" stroke-width="1.3"/></svg>
<div class="row" style="top:754.17px"></div>
<div class="cb" style="top:769.2px"></div>
<svg class="a" style="left:326.9px;top:769.8px" width="17.6" height="17.6" viewBox="0 0 16 16"><path d="M1.1 15.7 L2.6 11.05 L9.83 3.77 L12.95 6.87 L5.75 14.15Z" fill="#222"/><path d="M10.75 2.85 L13.87 5.95 A2.2 2.2 0 0 0 10.75 2.85Z" fill="#222"/></svg>
<div class="av" style="top:760.4px">AN</div>
<div class="cell" style="left:432px;top:766.5px;font-size:14.75px">7/12/2025 8:15:32 AM...</div>
<div class="cell" style="left:638px;top:766.5px">Andrew Miller</div>
<div class="cell" style="left:869px;top:766.5px">andrew</div>
<div class="cell" style="left:1107px;top:766.5px;letter-spacing:-0.35px">OU=Employees,DC=one,D...</div>
<div class="no" style="top:766.8px">No</div>
<svg class="a" style="left:1346.8px;top:772.1px" width="13" height="13" viewBox="0 0 13 13"><circle cx="6.3" cy="6.3" r="6.2" fill="#f04a4a"/><path d="M4.2 4.2 L8.4 8.4 M8.4 4.2 L4.2 8.4" stroke="#fff" stroke-width="1.3"/></svg>
<div class="row" style="top:804.64px"></div>
<div class="cb" style="top:819.6px"></div>
<svg class="a" style="left:326.9px;top:820.2px" width="17.6" height="17.6" viewBox="0 0 16 16"><path d="M1.1 15.7 L2.6 11.05 L9.83 3.77 L12.95 6.87 L5.75 14.15Z" fill="#222"/><path d="M10.75 2.85 L13.87 5.95 A2.2 2.2 0 0 0 10.75 2.85Z" fill="#222"/></svg>
<div class="av" style="top:810.8px">IS</div>
<div class="cell" style="left:432px;top:816.9px;font-size:14.75px">7/1/2025 4:11:50 AM (...</div>
<div class="cell" style="left:638px;top:816.9px">Isaiah Roy</div>
<div class="cell" style="left:869px;top:816.9px">isaiah</div>
<div class="cell" style="left:1107px;top:816.9px;letter-spacing:-0.35px">OU=Employees,DC=one,D...</div>
<div class="no" style="top:817.2px">No</div>
<svg class="a" style="left:1346.8px;top:822.5px" width="13" height="13" viewBox="0 0 13 13"><circle cx="6.3" cy="6.3" r="6.2" fill="#f04a4a"/><path d="M4.2 4.2 L8.4 8.4 M8.4 4.2 L4.2 8.4" stroke="#fff" stroke-width="1.3"/></svg>
<div class="a" style="left:363px;top:198px;width:1px;height:657px;background:#f8f8fa"></div><div class="a" style="left:420px;top:198px;width:1px;height:657px;background:#f8f8fa"></div>
<div class="a" style="left:626px;top:198px;width:7px;height:657px;background:linear-gradient(to right,#ececef 0,#ececef 2px,rgba(245,245,247,0.6) 4px,rgba(255,255,255,0))"></div>
<div class="a" style="left:1467px;top:149px;width:53px;height:45px;background:#fff;border-radius:23px 0 0 23px;box-shadow:0 2px 2px rgba(0,0,0,0.10)"></div><div class="a" style="left:1520px;top:149px;width:6px;height:52px;background:#f1f1f1;border-radius:0 5px 5px 0"></div>
<svg class="a" style="left:1483px;top:158px" width="30" height="29" viewBox="0 0 30 29"><path d="M1.2 23.6 V1.5 H27.7 V14.6 M1.2 7.5 H27.7 M10.1 7.5 V23.6 M18.5 7.5 V13.6 M1.2 23.6 H14.3" fill="none" stroke="#77777c" stroke-width="1.7" stroke-linecap="square"/><circle cx="21.9" cy="21.2" r="3.3" fill="none" stroke="#77777c" stroke-width="1.7"/><circle cx="21.9" cy="21.2" r="5.3" fill="none" stroke="#77777c" stroke-width="2.2" stroke-dasharray="2.1 2.06" transform="rotate(11.5 21.9 21.2)"/></svg>
</body></html>
